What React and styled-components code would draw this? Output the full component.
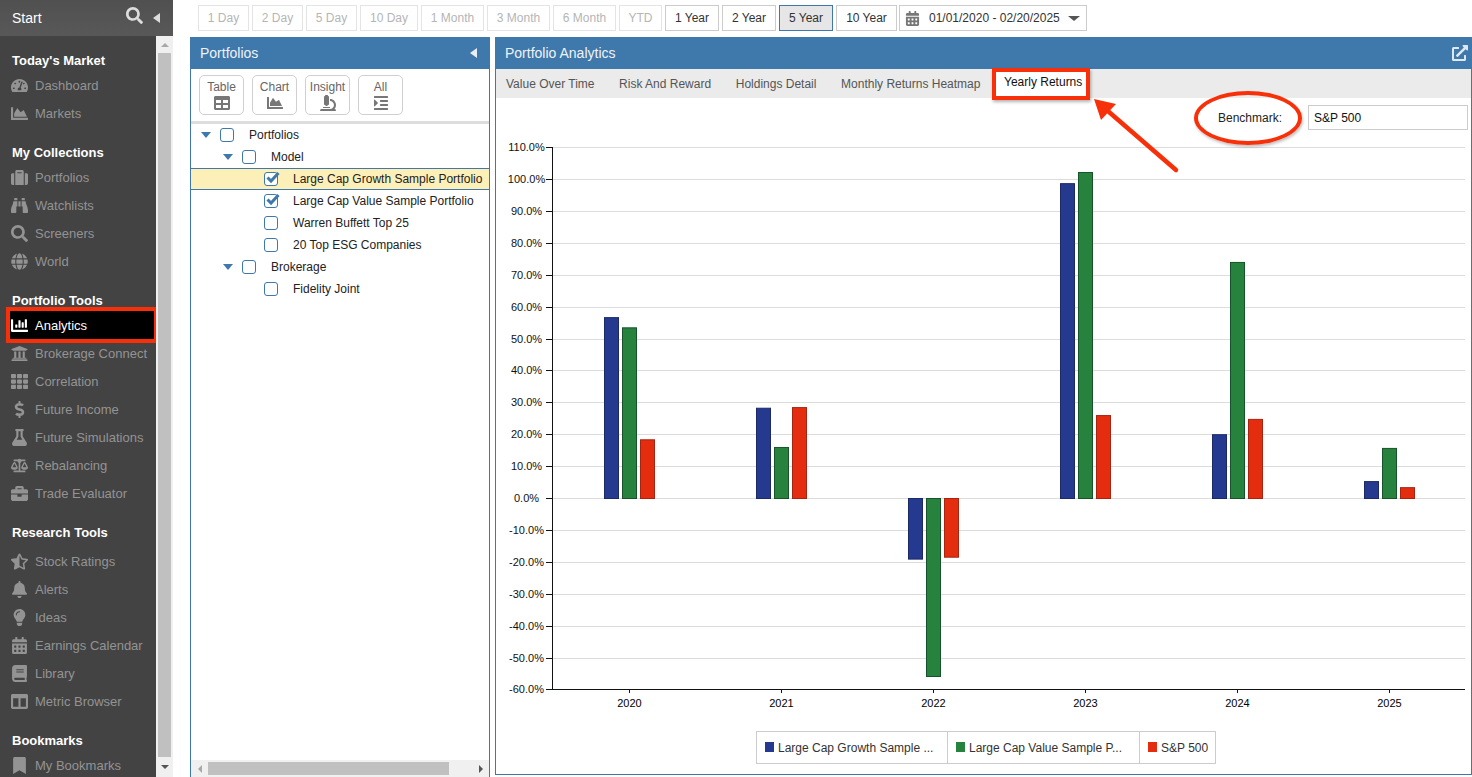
import React from 'react';
import styled, { createGlobalStyle } from 'styled-components';
import {
  FaTachometerAlt, FaChartArea, FaSuitcase, FaBinoculars, FaSearch, FaGlobe, FaChartBar,
  FaUniversity, FaTh, FaDollarSign, FaFlask, FaBalanceScale, FaBriefcase, FaStarHalfAlt,
  FaBell, FaLightbulb, FaCalendarAlt, FaBook, FaColumns, FaBookmark, FaTable, FaMicroscope,
  FaIndent, FaExternalLinkAlt,
} from 'react-icons/fa';

const BLUE = '#3f78ab';
const RED = '#f8300a';

const GlobalStyle = createGlobalStyle`
  html, body {
    margin: 0;
    height: 777px;
    overflow: hidden;
    background: #fff;
    font-family: "Liberation Sans", Arial, sans-serif;
  }
`;

const Page = styled.div`
  display: flex;
  width: 1472px;
  height: 777px;
  overflow: hidden;
`;

const Sidebar = styled.aside`
  display: flex;
  flex-direction: column;
  flex: 0 0 173px;
  background: #434343;
`;

const SideHeader = styled.div`
  display: flex;
  align-items: center;
  flex: 0 0 36px;
  padding: 0 13px 0 12px;
  box-sizing: border-box;
  background: linear-gradient(#505050, #585858);
  color: #fff;
  font-size: 14px;
  svg { margin: -5px 10px 0 auto; color: #ddd; }
`;

const LeftTriangle = styled.span`
  display: inline-block;
  border-style: solid;
  border-width: 5.5px 7px 5.5px 0;
  border-color: transparent ${p => p.$color || '#ddd'} transparent transparent;
`;

const SideBody = styled.div`
  display: flex;
  flex: 1;
  min-height: 0;
`;

const Nav = styled.nav`
  flex: 0 0 156px;
  padding-top: 12px;
  box-sizing: border-box;
`;

const NavGroup = styled.div`
  margin-bottom: 13px;
`;

const NavHeading = styled.div`
  height: 23px;
  line-height: 26px;
  padding-left: 12px;
  margin-bottom: ${p => p.$extra || 0}px;
  color: #fff;
  font-size: 13px;
  font-weight: 700;
  white-space: nowrap;
`;

const NavItem = styled.div`
  display: flex;
  align-items: center;
  height: 28px;
  margin: ${p => (p.$active ? '0 2px 0 10px' : '0')};
  padding-left: ${p => (p.$active ? 1 : 11)}px;
  background: ${p => (p.$active ? '#000' : 'transparent')};
  outline: ${p => (p.$active ? `4px solid ${RED}` : 'none')};
  color: ${p => (p.$active ? '#fff' : '#939393')};
  font-size: 13px;
  white-space: nowrap;
`;

const NavIcon = styled.span`
  display: flex;
  justify-content: center;
  flex: 0 0 17px;
  margin-right: 7px;
  font-size: 17px;
`;

const VScrollbar = styled.div`
  display: flex;
  flex-direction: column;
  flex: 0 0 17px;
  background: #f0f0f0;
`;

const ScrollButton = styled.div`
  display: flex;
  align-items: center;
  justify-content: center;
  flex: 0 0 ${p => p.$size || 17}px;
  margin-left: ${p => (p.$end ? 'auto' : '0')};
`;

const VThumb = styled.div`
  flex: 1;
  margin: 0 2px;
  background: #c0c0c0;
`;

const Arrow = styled.span`
  display: block;
  border-style: solid;
  border-color: transparent;
  ${p => p.$dir === 'up' && `border-width: 0 4px 4px; border-bottom-color: ${p.$color};`}
  ${p => p.$dir === 'down' && `border-width: 4px 4px 0; border-top-color: ${p.$color};`}
  ${p => p.$dir === 'left' && `border-width: 4px 4px 4px 0; border-right-color: ${p.$color};`}
  ${p => p.$dir === 'right' && `border-width: 4px 0 4px 4px; border-left-color: ${p.$color};`}
`;

const Main = styled.main`
  display: flex;
  flex-direction: column;
  flex: 1;
  min-width: 0;
  padding-left: 17px;
`;

const RangeBar = styled.div`
  display: flex;
  gap: 3px;
  flex: 0 0 37px;
  padding: 5px 0 6px 8px;
  box-sizing: border-box;
`;

const RangeButton = styled.div`
  display: flex;
  align-items: center;
  justify-content: center;
  width: ${p => p.$width}px;
  box-sizing: border-box;
  border: 1px solid ${p => (p.$active ? BLUE : p.$disabled ? '#e4e4e4' : '#ccc')};
  background: ${p => (p.$active ? '#e6e6e6' : '#fff')};
  color: ${p => (p.$disabled ? '#b5b5b5' : '#333')};
  font-size: 12px;
  white-space: nowrap;
`;

const DateButton = styled(RangeButton)`
  justify-content: flex-start;
  width: 188px;
  margin-left: -1px;
  padding: 0 6px 0 5px;
  svg { margin-right: 9px; font-size: 15px; color: #777; }
`;

const DateCaret = styled.span`
  margin-left: auto;
  border-style: solid;
  border-width: 5px 6px 0;
  border-color: #555 transparent transparent;
`;

const Panels = styled.div`
  display: flex;
  gap: 5px;
  flex: 1;
  min-height: 0;
`;

const LeftPanel = styled.section`
  display: flex;
  flex-direction: column;
  flex: 0 0 300px;
  box-sizing: border-box;
  border: solid ${BLUE};
  border-width: 0 1px;
`;

const RightPanel = styled.section`
  position: relative;
  display: flex;
  flex-direction: column;
  flex: 1;
  min-width: 0;
  height: 738px;
  box-sizing: border-box;
  border: solid ${BLUE};
  border-width: 0 1px 1px;
`;

const PanelHeader = styled.header`
  display: flex;
  align-items: center;
  justify-content: space-between;
  flex: 0 0 32px;
  margin: 0 -1px;
  padding: 0 ${p => p.$right || 13}px 0 10px;
  background: ${BLUE};
  color: #eef3f8;
  font-size: 14px;
`;

const IconTools = styled.div`
  display: flex;
  gap: 8px;
  flex: 0 0 55px;
  padding: 6px 0 0 8px;
  box-sizing: border-box;
  border-bottom: 3px solid #ddd;
`;

const IconTool = styled.div`
  display: flex;
  flex-direction: column;
  align-items: center;
  gap: 1px;
  width: 45px;
  height: 40px;
  padding-top: 4px;
  box-sizing: border-box;
  border: 1px solid #d0d0d0;
  border-radius: 5px;
  color: #666;
  font-size: 12px;
  line-height: 14px;
  svg { font-size: 16px; color: #777; }
`;

const Tree = styled.div`
  flex: 1;
  min-height: 0;
`;

const TreeRow = styled.div`
  display: flex;
  align-items: center;
  height: 22px;
  padding-left: ${p => 10 + p.$level * 22}px;
  box-sizing: border-box;
  border: solid ${p => (p.$selected ? BLUE : 'transparent')};
  border-width: 1px 0;
  background: ${p => (p.$selected ? '#fdefb8' : 'transparent')};
  color: #222;
  font-size: 12px;
  white-space: nowrap;
`;

const Caret = styled.span`
  flex: 0 0 auto;
  width: 0;
  margin-right: 9px;
  border-style: solid;
  border-width: 6px 5.5px 0;
  border-color: ${p => (p.$hidden ? 'transparent' : BLUE)} transparent transparent;
`;

const Check = styled.span`
  position: relative;
  flex: 0 0 14px;
  height: 14px;
  margin-right: 15px;
  box-sizing: border-box;
  border: 1.5px solid ${BLUE};
  border-radius: 3px;
  background: #fff;
  svg { position: absolute; left: 0; top: -3px; }
`;

const HScrollbar = styled.div`
  display: flex;
  align-items: center;
  flex: 0 0 17px;
  background: #f0f0f0;
`;

const HThumb = styled.div`
  width: 241px;
  height: 13px;
  background: #c0c0c0;
`;

const TabStrip = styled.div`
  display: flex;
  gap: 4.6px;
  flex: 0 0 29px;
  min-height: 0;
  height: 29px;
  background: #ebebeb;
`;

const Tab = styled.div`
  display: flex;
  align-items: center;
  padding: 0 10px;
  color: #555;
  font-size: 12px;
  white-space: nowrap;
`;

const MarkedTab = styled(Tab)`
  z-index: 1;
  flex: 0 0 auto;
  height: 32px;
  margin: -1px 0 0 -3px;
  padding: 0 4px 4px 8px;
  box-sizing: border-box;
  border: 4px solid ${RED};
  background: #fff;
  color: #111;
  box-shadow: 1px 2px 3px rgba(0, 0, 0, 0.3);
`;

const BenchmarkRow = styled.div`
  display: flex;
  align-items: center;
  justify-content: flex-end;
  flex: 0 0 32px;
  padding: 7px 3px 0 0;
  box-sizing: border-box;
`;

const BenchmarkLabel = styled.label`
  position: relative;
  margin-right: 26px;
  color: #222;
  font-size: 12px;
`;

const Ring = styled.span`
  position: absolute;
  left: -24px;
  top: -20px;
  width: 108px;
  height: 54px;
  box-sizing: border-box;
  border: 4px solid ${RED};
  border-radius: 50%;
  box-shadow: 1px 2px 3px rgba(0, 0, 0, 0.25);
`;

const BenchmarkValue = styled.div`
  display: flex;
  align-items: center;
  width: 160px;
  height: 25px;
  padding-left: 5px;
  box-sizing: border-box;
  border: 1px solid #ccc;
  color: #111;
  font-size: 12px;
`;

const CalloutArrow = styled.svg`
  position: absolute;
  left: 595px;
  top: 56px;
  z-index: 2;
  overflow: visible;
`;

const ChartSvg = styled.svg`
  display: block;
  flex: 0 0 600px;
  text { font-family: "Liberation Sans", Arial, sans-serif; }
`;

const Legend = styled.div`
  display: flex;
  align-self: flex-start;
  margin: 1px 0 0 260px;
  border: 1px solid #ccc;
  height: 33px;
  box-sizing: border-box;
`;

const LegendCell = styled.div`
  display: flex;
  align-items: center;
  gap: 4px;
  width: ${p => p.$width}px;
  padding-left: 8px;
  box-sizing: border-box;
  border-left: ${p => (p.$first ? 'none' : '1px solid #ccc')};
  color: #333;
  font-size: 12px;
  white-space: nowrap;
`;

const Swatch = styled.span`
  width: 9px;
  height: 10px;
  margin-top: -2px;
  background: ${p => p.$color};
`;

const navGroups = [
  { title: "Today's Market", items: [['Dashboard', FaTachometerAlt], ['Markets', FaChartArea]] },
  {
    title: 'My Collections',
    items: [['Portfolios', FaSuitcase], ['Watchlists', FaBinoculars], ['Screeners', FaSearch], ['World', FaGlobe]],
  },
  {
    title: 'Portfolio Tools',
    items: [
      ['Analytics', FaChartBar, true],
      ['Brokerage Connect', FaUniversity],
      ['Correlation', FaTh],
      ['Future Income', FaDollarSign],
      ['Future Simulations', FaFlask],
      ['Rebalancing', FaBalanceScale],
      ['Trade Evaluator', FaBriefcase],
    ],
  },
  {
    title: 'Research Tools',
    extra: 4,
    items: [
      ['Stock Ratings', FaStarHalfAlt],
      ['Alerts', FaBell],
      ['Ideas', FaLightbulb],
      ['Earnings Calendar', FaCalendarAlt],
      ['Library', FaBook],
      ['Metric Browser', FaColumns],
    ],
  },
  { title: 'Bookmarks', items: [['My Bookmarks', FaBookmark]] },
];

const ranges = [
  { label: '1 Day', width: 51, disabled: true },
  { label: '2 Day', width: 51, disabled: true },
  { label: '5 Day', width: 51, disabled: true },
  { label: '10 Day', width: 58, disabled: true },
  { label: '1 Month', width: 63, disabled: true },
  { label: '3 Month', width: 63, disabled: true },
  { label: '6 Month', width: 63, disabled: true },
  { label: 'YTD', width: 43, disabled: true },
  { label: '1 Year', width: 54 },
  { label: '2 Year', width: 54 },
  { label: '5 Year', width: 54, active: true },
  { label: '10 Year', width: 61 },
];

const tree = [
  { label: 'Portfolios', level: 0, caret: true },
  { label: 'Model', level: 1, caret: true },
  { label: 'Large Cap Growth Sample Portfolio', level: 2, checked: true, selected: true },
  { label: 'Large Cap Value Sample Portfolio', level: 2, checked: true },
  { label: 'Warren Buffett Top 25', level: 2 },
  { label: '20 Top ESG Companies', level: 2 },
  { label: 'Brokerage', level: 1, caret: true },
  { label: 'Fidelity Joint', level: 2 },
];

const series = [
  { color: '#25398f', edge: '#1b2a66' },
  { color: '#27823d', edge: '#17532a' },
  { color: '#e32d0e', edge: '#a82410' },
];

const years = [
  { year: 2020, x: 604, values: [56.7, 53.5, 18.4] },
  { year: 2021, x: 756, values: [28.3, 16, 28.5] },
  { year: 2022, x: 908, values: [-19, -55.8, -18.4] },
  { year: 2023, x: 1060, values: [98.7, 102.2, 26] },
  { year: 2024, x: 1212, values: [20, 74, 24.8] },
  { year: 2025, x: 1364, values: [5.3, 15.7, 3.4] },
];

const ZERO = 498;
const PER_PCT = 3.19;
const ticks = [110, 100, 90, 80, 70, 60, 50, 40, 30, 20, 10, 0, -10, -20, -30, -40, -50, -60];

function Chart() {
  return (
    <ChartSvg width="976" height="600" viewBox="496 130 976 600">
      {ticks.map(t => {
        const y = Math.round(ZERO - t * PER_PCT) + 0.5;
        return (
          <g key={t}>
            <line x1="552" x2="1465" y1={y} y2={y} stroke="#dcdcdc" />
            <line x1="546" x2="552" y1={y} y2={y} stroke="#111" />
            <text x="526.5" y={y + 3} fontSize="11" textAnchor="middle" fill="#111">
              {t.toFixed(1)}%
            </text>
          </g>
        );
      })}
      {years.map(g => (
        <g key={g.year}>
          {g.values.map((v, i) => {
            const h = Math.abs(v) * PER_PCT;
            return (
              <rect
                key={i}
                x={g.x + i * 18 + 0.5}
                y={(v > 0 ? ZERO - h : ZERO) + 0.5}
                width="14"
                height={h}
                fill={series[i].color}
                stroke={series[i].edge}
              />
            );
          })}
          <line x1={g.x + 25.5} x2={g.x + 25.5} y1="689" y2="693" stroke="#111" />
          <text x={g.x + 25.5} y="707" fontSize="11" textAnchor="middle" fill="#000">
            {g.year}
          </text>
        </g>
      ))}
      <line x1="552.5" x2="552.5" y1="147" y2="690" stroke="#111" />
      <line x1="552" x2="1465" y1="689.5" y2="689.5" stroke="#111" />
    </ChartSvg>
  );
}

export default function App() {
  return (
    <Page>
      <GlobalStyle />
      <Sidebar>
        <SideHeader>
          Start
          <FaSearch size={17} />
          <LeftTriangle />
        </SideHeader>
        <SideBody>
          <Nav>
            {navGroups.map(group => (
              <NavGroup key={group.title}>
                <NavHeading $extra={group.extra}>{group.title}</NavHeading>
                {group.items.map(([label, Icon, active]) => (
                  <NavItem key={label} $active={active}>
                    <NavIcon><Icon /></NavIcon>
                    {label}
                  </NavItem>
                ))}
              </NavGroup>
            ))}
          </Nav>
          <VScrollbar>
            <ScrollButton><Arrow $dir="up" $color="#a8a8a8" /></ScrollButton>
            <VThumb />
            <ScrollButton $size={20}><Arrow $dir="down" $color="#555" /></ScrollButton>
          </VScrollbar>
        </SideBody>
      </Sidebar>

      <Main>
        <RangeBar>
          {ranges.map(r => (
            <RangeButton key={r.label} $width={r.width} $disabled={r.disabled} $active={r.active}>
              {r.label}
            </RangeButton>
          ))}
          <DateButton>
            <FaCalendarAlt />
            01/01/2020 - 02/20/2025
            <DateCaret />
          </DateButton>
        </RangeBar>

        <Panels>
          <LeftPanel>
            <PanelHeader>
              Portfolios
              <LeftTriangle $color="#e8eef4" />
            </PanelHeader>
            <IconTools>
              <IconTool>Table<FaTable /></IconTool>
              <IconTool>Chart<FaChartArea /></IconTool>
              <IconTool>Insight<FaMicroscope /></IconTool>
              <IconTool>All<FaIndent /></IconTool>
            </IconTools>
            <Tree>
              {tree.map(row => (
                <TreeRow key={row.label} $level={row.level} $selected={row.selected}>
                  <Caret $hidden={!row.caret} />
                  <Check>
                    {row.checked && (
                      <svg width="16" height="15" viewBox="0 0 16 15">
                        <path d="M2.5 7.5l3.5 3.5 7.5-8" fill="none" stroke={BLUE} strokeWidth="3" />
                      </svg>
                    )}
                  </Check>
                  {row.label}
                </TreeRow>
              ))}
            </Tree>
            <HScrollbar>
              <ScrollButton><Arrow $dir="left" $color="#a8a8a8" /></ScrollButton>
              <HThumb />
              <ScrollButton $end><Arrow $dir="right" $color="#555" /></ScrollButton>
            </HScrollbar>
          </LeftPanel>

          <RightPanel>
            <PanelHeader $right={4}>
              Portfolio Analytics
              <FaExternalLinkAlt size={16} color="#dfe8f0" />
            </PanelHeader>
            <TabStrip>
              <Tab>Value Over Time</Tab>
              <Tab>Risk And Reward</Tab>
              <Tab>Holdings Detail</Tab>
              <Tab>Monthly Returns Heatmap</Tab>
              <MarkedTab>Yearly Returns</MarkedTab>
            </TabStrip>
            <BenchmarkRow>
              <BenchmarkLabel>
                <Ring />
                Benchmark:
              </BenchmarkLabel>
              <BenchmarkValue>S&amp;P 500</BenchmarkValue>
            </BenchmarkRow>
            <Chart />
            <Legend>
              <LegendCell $first $width={190}>
                <Swatch $color={series[0].color} />
                Large Cap Growth Sample ...
              </LegendCell>
              <LegendCell $width={192}>
                <Swatch $color={series[1].color} />
                Large Cap Value Sample P...
              </LegendCell>
              <LegendCell $width={76}>
                <Swatch $color={series[2].color} />
                S&amp;P 500
              </LegendCell>
            </Legend>
            <CalloutArrow width="90" height="80" viewBox="0 0 90 80">
              <path d="M85 77L18 19" stroke={RED} strokeWidth="4.5" strokeLinecap="round" />
              <path d="M3 6L25 11L10 27Z" fill={RED} />
            </CalloutArrow>
          </RightPanel>
        </Panels>
      </Main>
    </Page>
  );
}
